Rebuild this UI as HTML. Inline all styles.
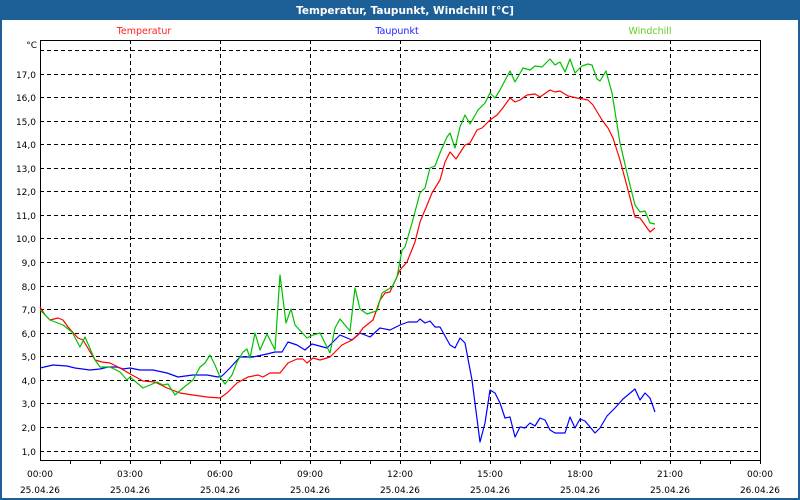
<!DOCTYPE html>
<html><head><meta charset="utf-8"><style>
html,body{margin:0;padding:0;width:800px;height:500px;overflow:hidden;background:#fff}
svg{display:block}
text{font-family:"DejaVu Sans","Liberation Sans",sans-serif}
</style></head><body>
<svg width="800" height="500" viewBox="0 0 800 500" xmlns="http://www.w3.org/2000/svg">
<rect x="0" y="0" width="800" height="500" fill="#1d5f97"/>
<rect x="2" y="20" width="796" height="478" fill="#fff"/>
<text x="405" y="14" fill="#fff" font-size="10.5" font-weight="bold" text-anchor="middle">Temperatur, Taupunkt, Windchill [°C]</text>
<text x="144" y="34" fill="#ff2020" font-size="9.5" text-anchor="middle">Temperatur</text>
<text x="397" y="34" fill="#2020ff" font-size="9.5" text-anchor="middle">Taupunkt</text>
<text x="650" y="34" fill="#60d020" font-size="9.5" text-anchor="middle">Windchill</text>
<g stroke="#000" stroke-width="1" stroke-dasharray="4,3" fill="none">
<path d="M40 50.5H760M40 74.5H760M40 97.5H760M40 121.5H760M40 144.5H760M40 168.5H760M40 191.5H760M40 215.5H760M40 238.5H760M40 262.5H760M40 286.5H760M40 309.5H760M40 333.5H760M40 356.5H760M40 380.5H760M40 403.5H760M40 427.5H760M40 451.5H760"/>
<path d="M130.5 40V460M220.5 40V460M310.5 40V460M400.5 40V460M490.5 40V460M580.5 40V460M670.5 40V460"/>
</g>
<rect x="40.5" y="40.5" width="720" height="420" fill="none" stroke="#000" stroke-width="1"/>
<path stroke="#000" d="M70.5 460v4M100.5 460v4M130.5 460v4M160.5 460v4M190.5 460v4M220.5 460v4M250.5 460v4M280.5 460v4M310.5 460v4M340.5 460v4M370.5 460v4M400.5 460v4M430.5 460v4M460.5 460v4M490.5 460v4M520.5 460v4M550.5 460v4M580.5 460v4M610.5 460v4M640.5 460v4M670.5 460v4M700.5 460v4M730.5 460v4M760.5 460v4"/>
<g font-size="9" fill="#000" text-anchor="end">
<text x="37" y="48">°C</text>
<text x="36" y="78">17,0</text><text x="36" y="101">16,0</text><text x="36" y="125">15,0</text><text x="36" y="148">14,0</text><text x="36" y="172">13,0</text><text x="36" y="195">12,0</text><text x="36" y="219">11,0</text><text x="36" y="242">10,0</text><text x="36" y="266">9,0</text><text x="36" y="290">8,0</text><text x="36" y="313">7,0</text><text x="36" y="337">6,0</text><text x="36" y="360">5,0</text><text x="36" y="384">4,0</text><text x="36" y="407">3,0</text><text x="36" y="431">2,0</text><text x="36" y="455">1,0</text>
</g>
<g font-size="9" fill="#000" text-anchor="middle">
<text x="40" y="477">00:00</text><text x="130" y="477">03:00</text><text x="220" y="477">06:00</text><text x="310" y="477">09:00</text><text x="400" y="477">12:00</text><text x="490" y="477">15:00</text><text x="580" y="477">18:00</text><text x="670" y="477">21:00</text><text x="760" y="477">00:00</text>
<text x="40" y="493">25.04.26</text><text x="130" y="493">25.04.26</text><text x="220" y="493">25.04.26</text><text x="310" y="493">25.04.26</text><text x="400" y="493">25.04.26</text><text x="490" y="493">25.04.26</text><text x="580" y="493">25.04.26</text><text x="670" y="493">25.04.26</text><text x="760" y="493">26.04.26</text>
</g>
<g fill="none" stroke-width="1.2" stroke-linejoin="round">
<polyline stroke="#0000ff" points="40,368 53,365 67,366 75,368 90,370 100,369 108,367 117,367 123,369 130,368 140,370 153,370 167,373 178,377 193,375 207,375 218,377 222,376 230,368 240,357 253,357 267,354 275,352 282,352 288,342 297,345 305,350 312,344 327,348 340,335 352,340 360,333 370,337 380,328 390,330 400,325 408,322 417,322 420,319 425,323 430,321 435,327 440,327 450,345 455,348 460,338 465,343 472,380 480,442 485,423 490,390 495,393 500,403 505,418 510,417 515,437 520,427 525,428 530,423 535,426 540,418 545,420 550,430 555,433 565,433 570,417 575,428 580,419 585,421 595,433 600,428 607,416 615,408 623,399 635,389 640,400 645,393 650,398 655,412"/>
<polyline stroke="#ff0000" points="40,307 45,315 50,320 58,318 63,320 68,327 78,338 83,340 95,360 102,362 110,363 120,368 132,375 143,381 155,382 167,388 180,393 193,395 207,397 220,398 227,393 237,383 248,377 258,375 263,377 270,373 280,373 288,363 297,359 303,359 307,363 313,358 320,360 330,357 342,345 352,340 358,335 363,328 373,320 380,300 385,293 390,292 400,270 407,262 415,242 420,222 425,210 432,193 440,180 445,162 450,152 456,159 465,145 470,143 477,130 482,128 490,120 497,115 502,109 510,98 515,102 520,100 527,95 535,94 540,97 550,90 555,92 560,91 568,96 577,98 583,99 588,100 593,105 602,120 608,128 613,138 620,160 628,190 635,217 640,218 650,232 655,228"/>
<polyline stroke="#00c000" points="40,310 50,320 63,325 72,332 80,347 85,337 95,360 100,367 110,367 120,372 127,380 130,377 143,388 157,382 163,385 168,384 175,395 183,388 193,380 200,367 205,363 210,355 215,365 220,377 225,384 232,375 237,362 243,352 247,349 250,358 255,333 260,350 267,334 275,350 280,275 286,323 291,309 295,325 307,338 313,335 320,333 330,353 335,328 340,319 350,331 355,288 360,309 367,314 373,312 377,311 382,293 387,290 392,287 397,277 402,250 405,247 412,223 420,193 425,188 430,168 435,166 440,153 447,137 450,133 455,148 460,127 465,115 470,124 478,110 485,103 490,93 495,98 500,90 510,71 515,82 523,68 530,70 535,66 542,67 550,59 555,65 560,62 565,72 570,59 575,73 582,66 588,64 592,65 597,79 600,81 606,71 612,93 620,143 628,177 635,205 640,212 645,211 650,223 655,224"/>
</g>
</svg>
</body></html>
